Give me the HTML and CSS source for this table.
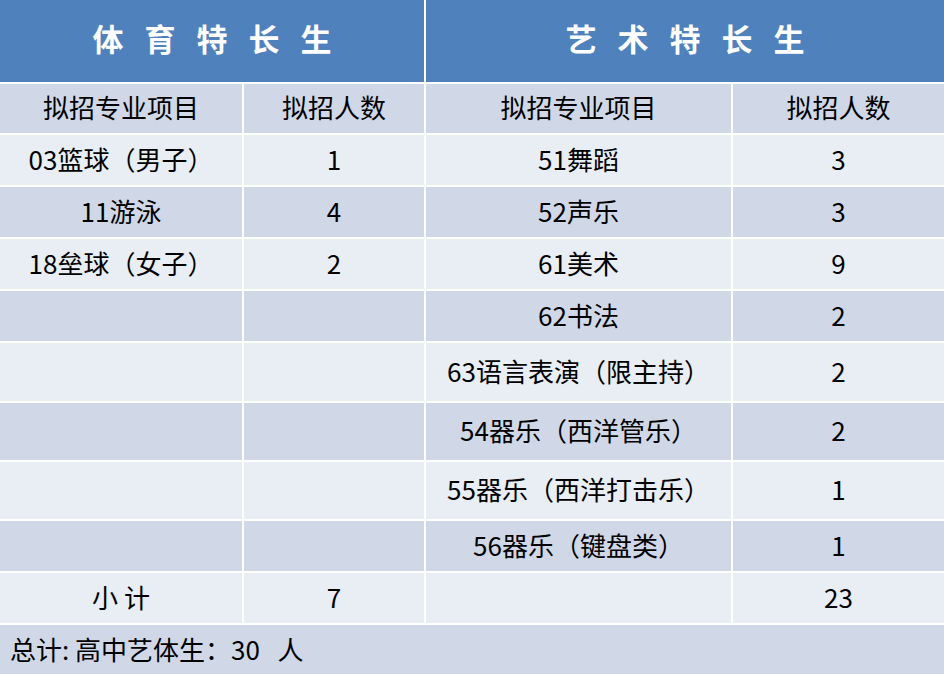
FILE: index.html
```html
<!DOCTYPE html>
<html lang="zh">
<head>
<meta charset="utf-8">
<link rel="stylesheet" href="styles.css">
</head>
<body>
<div class="table">
  <div class="cell head span2">体育特长生</div>
  <div class="cell head span2">艺术特长生</div>

  <div class="cell dark r-sub">拟招专业项目</div>
  <div class="cell dark r-sub">拟招人数</div>
  <div class="cell dark r-sub">拟招专业项目</div>
  <div class="cell dark r-sub">拟招人数</div>

  <div class="cell light">03篮球（男子）</div>
  <div class="cell light">1</div>
  <div class="cell light">51舞蹈</div>
  <div class="cell light">3</div>

  <div class="cell dark">11游泳</div>
  <div class="cell dark">4</div>
  <div class="cell dark">52声乐</div>
  <div class="cell dark">3</div>

  <div class="cell light">18垒球（女子）</div>
  <div class="cell light">2</div>
  <div class="cell light">61美术</div>
  <div class="cell light">9</div>

  <div class="cell dark"></div>
  <div class="cell dark"></div>
  <div class="cell dark">62书法</div>
  <div class="cell dark">2</div>

  <div class="cell light"></div>
  <div class="cell light"></div>
  <div class="cell light">63语言表演（限主持）</div>
  <div class="cell light">2</div>

  <div class="cell dark"></div>
  <div class="cell dark"></div>
  <div class="cell dark">54器乐（西洋管乐）</div>
  <div class="cell dark">2</div>

  <div class="cell light"></div>
  <div class="cell light"></div>
  <div class="cell light">55器乐（西洋打击乐）</div>
  <div class="cell light">1</div>

  <div class="cell dark"></div>
  <div class="cell dark"></div>
  <div class="cell dark">56器乐（键盘类）</div>
  <div class="cell dark">1</div>

  <div class="cell light">小 计</div>
  <div class="cell light">7</div>
  <div class="cell light"></div>
  <div class="cell light">23</div>

  <div class="cell dark span4 total">总计: 高中艺体生：30&nbsp;&nbsp;&nbsp;人</div>
</div>
</body>
</html>
```

FILE: styles.css
```css
html, body {
  margin: 0;
  padding: 0;
  background: #ffffff;
}

.table {
  width: 944px;
  height: 674px;
  display: grid;
  grid-template-columns: 242px 180px 305px 211px;
  grid-template-rows: 82px 49px 50px 50px 50px 50px 58px 57px 57px 50px 50px 1fr;
  gap: 2px 2px;
  background: #ffffff;
  font-family: "Noto Sans CJK SC", "Noto Sans", sans-serif;
  font-size: 26px;
  color: #000000;
}

.cell {
  display: flex;
  align-items: center;
  justify-content: center;
  white-space: nowrap;
  line-height: 1;
  padding-bottom: 3px;
  box-sizing: border-box;
}

.span2 {
  grid-column: span 2;
}

.span4 {
  grid-column: span 4;
}

.head {
  background: #4f81bd;
  color: #ffffff;
  font-weight: 700;
  font-size: 31px;
  letter-spacing: 21px;
  padding-left: 21px;
  padding-bottom: 8px;
}

.dark {
  background: #d0d8e8;
}

.light {
  background: #e9edf4;
}

.total {
  justify-content: flex-start;
  padding-left: 10px;
  padding-bottom: 2px;
}
```
